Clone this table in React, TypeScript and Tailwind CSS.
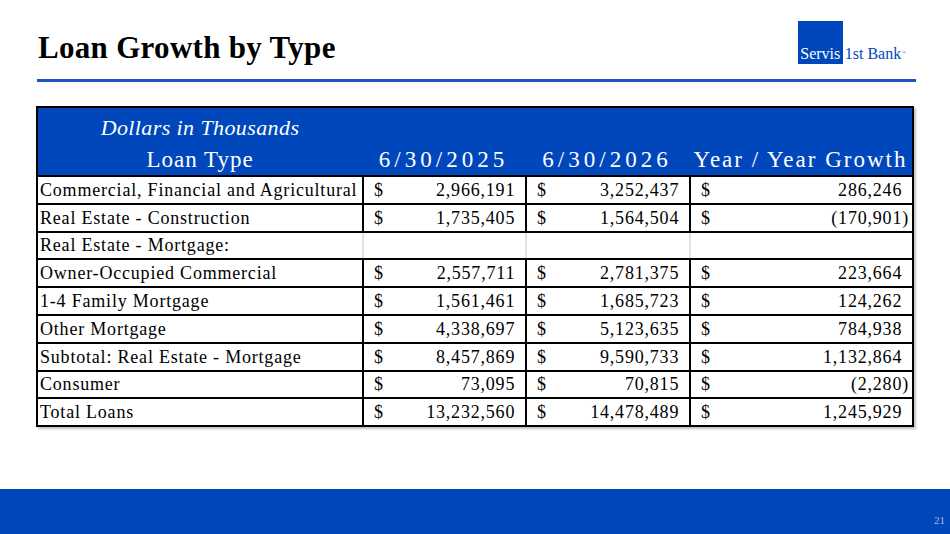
import React from "react";

type Row = {
  label: string;
  a?: string;
  b?: string;
  c?: string;
  blank?: boolean;
};

const rows: Row[] = [
  { label: "Commercial, Financial and Agricultural", a: "2,966,191", b: "3,252,437", c: "286,246" },
  { label: "Real Estate - Construction", a: "1,735,405", b: "1,564,504", c: "(170,901)" },
  { label: "Real Estate - Mortgage:", blank: true },
  { label: "Owner-Occupied Commercial", a: "2,557,711", b: "2,781,375", c: "223,664" },
  { label: "1-4 Family Mortgage", a: "1,561,461", b: "1,685,723", c: "124,262" },
  { label: "Other Mortgage", a: "4,338,697", b: "5,123,635", c: "784,938" },
  { label: "Subtotal: Real Estate - Mortgage", a: "8,457,869", b: "9,590,733", c: "1,132,864" },
  { label: "Consumer", a: "73,095", b: "70,815", c: "(2,280)" },
  { label: "Total Loans", a: "13,232,560", b: "14,478,489", c: "1,245,929" },
];

const serif = { fontFamily: '"Liberation Serif", "DejaVu Serif", serif' };

// accounting style: positives leave room for the closing paren
const Amount = ({ value }: { value?: string }) => {
  if (!value) return null;
  const neg = value.startsWith("(");
  return (
    <div className="flex w-full items-center justify-between pl-[10px] pr-[3px]">
      <span>$</span>
      <span>
        {value}
        {!neg && <span className="invisible">)</span>}
      </span>
    </div>
  );
};

export default function App() {
  return (
    <div className="relative h-[534px] w-[950px] overflow-hidden bg-white text-black" style={serif}>
      {/* Title + logo */}
      <div className="flex h-[79px] items-start justify-between pl-[38px] pr-[44px]">
        <h1 className="mt-[32px] text-[31px] font-bold leading-none tracking-[0.3px]">Loan Growth by Type</h1>
        <div className="mt-[21px] flex items-end">
          <div className="flex h-[43px] w-[45px] items-end justify-center bg-[#0047bb] pb-[2px]">
            <span className="text-[16px] leading-none text-white">Servis</span>
          </div>
          <span className="ml-[2px] pb-[2px] text-[16px] leading-none text-[#0047bb]">1st Bank</span>
          <span className="mb-[9px] ml-[1px] text-[5px] leading-none text-[#0047bb]">®</span>
        </div>
      </div>
      <div className="ml-[37px] h-[3px] w-[879px] bg-[#1d55c0]" />

      {/* Table */}
      <div className="ml-[36px] mt-[24px] w-[878px] border-2 border-black text-[18px] leading-none tracking-[0.8px] shadow-[2px_2px_2px_rgba(0,0,0,0.25)]">
        <div className="h-[67px] bg-[#0047bb] text-white">
          <div className="grid h-[35px] grid-cols-[324px_163px_164px_223px] items-end">
            <div className="pb-[4px] text-center text-[22px] italic tracking-[0.4px]">Dollars in Thousands</div>
          </div>
          <div className="grid h-[32px] grid-cols-[324px_163px_164px_223px] items-center text-[23px]">
            <div className="text-center tracking-[1px]">Loan Type</div>
            <div className="text-center tracking-[4px]">6/30/2025</div>
            <div className="text-center tracking-[4px]">6/30/2026</div>
            <div className="text-center tracking-[2px]">Year / Year Growth</div>
          </div>
        </div>
        {rows.map((r) => (
          <div
            key={r.label}
            className="grid h-[27.8px] grid-cols-[324px_163px_164px_223px] border-t-2 border-black"
          >
            <div className="flex items-center whitespace-nowrap pl-[2px]">{r.label}</div>
            {[r.a, r.b, r.c].map((v, i) => (
              <div
                key={i}
                className={
                  r.blank
                    ? "flex items-center border-l-2 border-[#e2e2e2]"
                    : "flex items-center border-l-2 border-black"
                }
              >
                <Amount value={v} />
              </div>
            ))}
          </div>
        ))}
      </div>

      {/* Footer band */}
      <div className="absolute bottom-0 left-0 flex h-[45px] w-[950px] items-end justify-end bg-[#0047bb] pb-[8px] pr-[5px]">
        <span className="text-[11px] leading-none text-[#a9bde6]">21</span>
      </div>
    </div>
  );
}
